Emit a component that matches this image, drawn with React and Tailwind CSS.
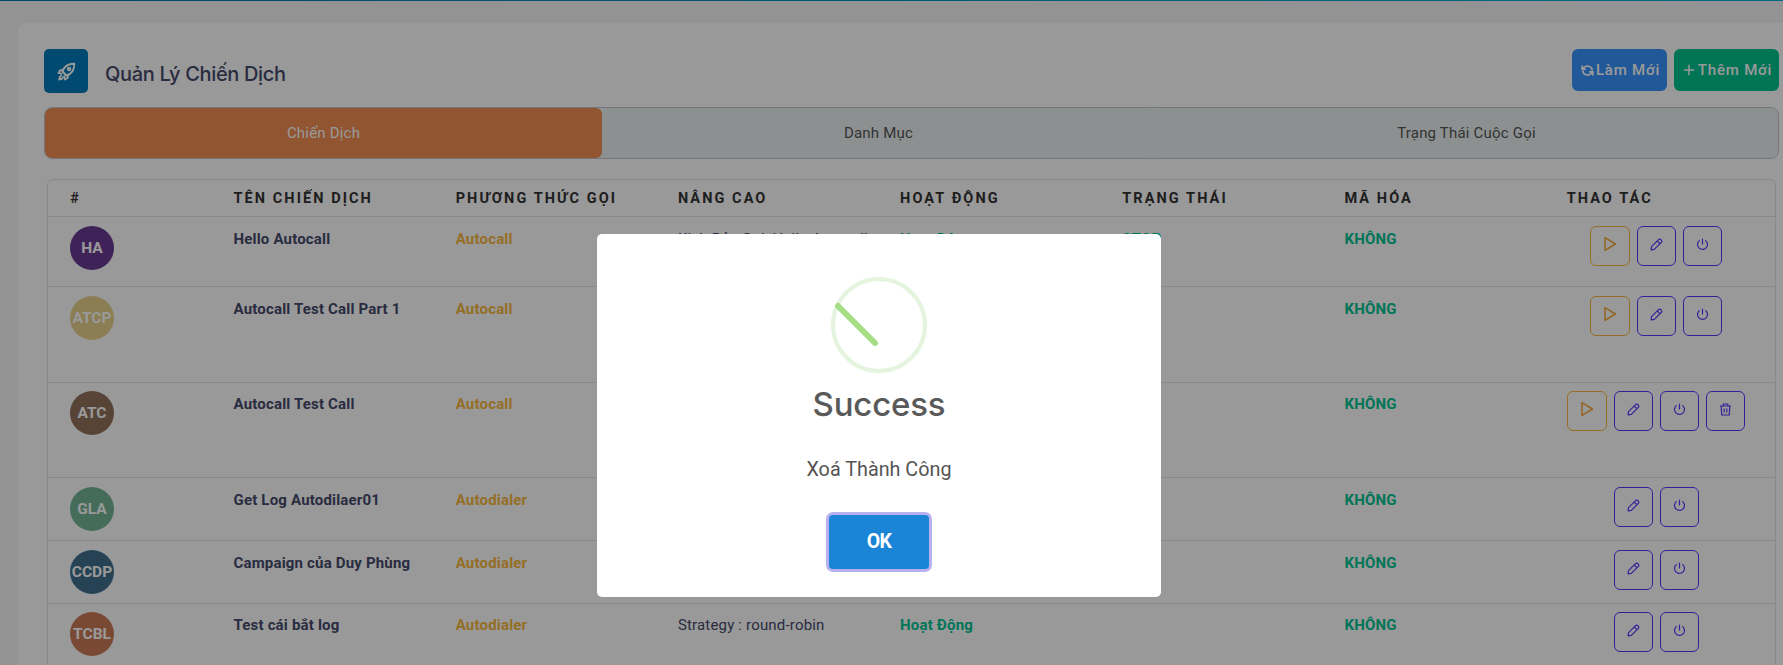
import React from "react";

const HEADS = ["#", "TÊN CHIẾN DỊCH", "PHƯƠNG THỨC GỌI", "NÂNG CAO", "HOẠT ĐỘNG", "TRẠNG THÁI", "MÃ HÓA", "THAO TÁC"];
const GRID = "grid grid-cols-[185px_222.2px_222.2px_222.2px_222.2px_222.2px_222.2px_1fr]";

const ROWS = [
  { code: "HA", bg: "bg-[#6a3a93]", name: "Hello Autocall", method: "Autocall", adv: "Kịch Bản Gọi: Hello Autocall", active: "Hoạt Động", status: "STOP", h: "h-[69px]", pad: "pt-[9px]", acts: ["play", "edit", "power"] },
  { code: "ATCP", bg: "bg-[#e8d08c]", name: "Autocall Test Call Part 1", method: "Autocall", h: "h-[96px]", pad: "pt-[9px]", acts: ["play", "edit", "power"] },
  { code: "ATC", bg: "bg-[#92725d]", name: "Autocall Test Call", method: "Autocall", h: "h-[95px]", pad: "pt-[8px]", acts: ["play", "edit", "power", "trash"] },
  { code: "GLA", bg: "bg-[#72b595]", name: "Get Log Autodilaer01", method: "Autodialer", h: "h-[63px]", pad: "pt-[9px]", acts: ["edit", "power"] },
  { code: "CCDP", bg: "bg-[#407190]", name: "Campaign của Duy Phùng", method: "Autodialer", h: "h-[63px]", pad: "pt-[9px]", acts: ["edit", "power"] },
  { code: "TCBL", bg: "bg-[#cc7b58]", name: "Test cái bắt log", method: "Autodialer", adv: "Strategy : round-robin", active: "Hoạt Động", h: "h-[70px]", pad: "pt-[8px]", acts: ["edit", "power"] },
];

function Icon({ kind }) {
  if (kind === "play")
    return (
      <svg width="16" height="16" viewBox="0 0 16 16" fill="none" stroke="currentColor" strokeWidth="1.5" strokeLinejoin="round">
        <path d="M3 1.6v12.8L13.4 8z" />
      </svg>
    );
  if (kind === "edit")
    return (
      <svg width="13" height="13" viewBox="0 0 13 13" fill="none" stroke="currentColor" strokeWidth="1.2" strokeLinejoin="round">
        <path d="M1.2 11.8l.3-3.200L8.300 1.800a1.950 1.950 0 0 1 2.800 2.800L4.300 11.400zM7.300 3l2.600 2.600" />
      </svg>
    );
  if (kind === "power")
    return (
      <svg width="13" height="13" viewBox="0 0 13 13" fill="none" stroke="currentColor" strokeWidth="1.2" strokeLinecap="round">
        <path d="M6.5 1v5M3.3 2.6a5 5 0 1 0 6.4 0" />
      </svg>
    );
  return (
    <svg width="13" height="13" viewBox="0 0 13 13" fill="none" stroke="currentColor" strokeWidth="1.2" strokeLinejoin="round">
      <path d="M1 3h11M4.2 3V1h4.6v2M2.2 3l.5 9h7.6l.5-9M5.2 5.4v4.2M7.8 5.4v4.2" />
    </svg>
  );
}

function Action({ kind }) {
  const tone = kind === "play" ? "border-[#fab83c] text-[#f5a93b]" : "border-[#5a35ff] text-[#5a35ff]";
  return (
    <button className={`flex size-[39.5px] shrink-0 items-center justify-center rounded-md border pb-[3px] ${tone}`}>
      <Icon kind={kind} />
    </button>
  );
}

function Row({ row }) {
  return (
    <div className={`${GRID} ${row.h} ${row.pad} border-t border-[#e4e4e4] pl-[22px] text-[15px] font-bold leading-[22px] tracking-[0.18px] text-[#454a6b] first:border-t-0`}>
      <div>
        <div className={`flex size-11 items-center justify-center rounded-full text-[15.500px] tracking-normal text-white ${row.bg}`}>{row.code}</div>
      </div>
      <div className="-ml-[21.5px] pt-[2px]">{row.name}</div>
      <div className="-ml-[21.5px] pt-[2px] text-[#f8b840]">{row.method}</div>
      <div className="-ml-[21.5px] pt-[2px] font-normal">{row.adv}</div>
      <div className="-ml-[21.5px] pt-[2px] text-[#00c493]">{row.active}</div>
      <div className="-ml-[21.5px] pt-[2px] text-[#00c493]">{row.status}</div>
      <div className="-ml-[21.5px] pt-[2px] text-[#00c493]">KHÔNG</div>
      <div className="-ml-[21.500px] flex w-[179.5px] justify-center gap-[6.7px]">
        {row.acts.map((a) => (
          <Action key={a} kind={a} />
        ))}
      </div>
    </div>
  );
}

export default function App() {
  return (
    <div className="relative h-[665px] w-full overflow-hidden bg-[#f6f6f6] font-[Roboto,sans-serif]">
      <div className="h-px w-full bg-linear-to-r from-[#0078b8] to-[#00aee0]" />
      <div className="ml-[18px] mt-[22px] h-[700px] rounded-tl-lg bg-white pl-[26px] pr-1 pt-[26px]">
        <header className="flex h-11 items-start justify-between">
          <div className="flex items-center">
            <div className="flex size-11 items-center justify-center rounded-[5px] bg-[#007bbb] text-white">
              <svg width="19" height="19" viewBox="0 0 19 19" fill="none" stroke="currentColor" strokeWidth="1.9" strokeLinejoin="round" strokeLinecap="round">
                <path d="M5.5 9.5C7 5 11 1.6 17.3 1.7 17.4 8 14 12 9.5 13.500z" />
                <path d="M6 8.200H3.200L1.500 11l3.200.6M10.800 13v2.800L8 17.500l-.6-3.200" />
                <circle cx="12.100" cy="6.900" r="1.300" />
                <path d="M4.300 13.500c-1.500.7-2 2-2.200 4 2-.2 3.300-.7 4-2.200" />
              </svg>
            </div>
            <h1 className="ml-[17px] pt-[6px] font-[Inter,sans-serif] text-[20px] font-medium tracking-[-0.340px] text-[#454a6b]">Quản Lý Chiến Dịch</h1>
          </div>
          <div className="flex gap-[7px] text-[15px] font-medium tracking-[0.8px] text-white">
            <button className="flex h-[42px] w-[95px] items-center justify-center rounded-md bg-[#3693fd] pl-[2px]">
              <svg className="mr-[2px] shrink-0" width="13" height="13" viewBox="0 0 14 14" fill="none" stroke="currentColor" strokeWidth="1.8">
                <path d="M1.200 1.500v4h4M12.800 12.500v-4h-4M1.600 5.300l1.600-1.600C5.800 1.200 11.500 1.800 12.300 7M12.400 8.700l-1.600 1.600C8.200 12.800 2.500 12.200 1.700 7" />
              </svg>
              Làm Mới
            </button>
            <button className="flex h-[42px] w-[105px] items-center justify-center rounded-md bg-[#00c38f] pl-[2px]">
              <svg className="mr-[3px] shrink-0" width="12" height="12" viewBox="0 0 12 12" stroke="currentColor" strokeWidth="1.5">
                <path d="M6 .8v10.400M.8 6h10.400" />
              </svg>
              Thêm Mới
            </button>
          </div>
        </header>
        <nav className="mt-[14px] flex h-[52px] overflow-hidden rounded-lg border border-[#c4c4cc] bg-[#f1f4f4] text-[15px] tracking-[0.2px] text-[#555]">
          <div className="flex w-[557px] items-center justify-center rounded-md bg-[#f28f53] text-white">Chiến Dịch</div>
          <div className="flex w-[553px] items-center justify-center rounded-md bg-[#ebf1f1]">Danh Mục</div>
          <div className="flex flex-1 items-center justify-center rounded-md bg-[#ebf1f1]">Trạng Thái Cuộc Gọi</div>
        </nav>
        <section className="ml-[3px] mr-[3px] mt-5 h-[600px] rounded-t-md border border-[#e4e4e4]">
          <div className={`${GRID} h-[37px] items-center border-b border-[#e4e4e4] pl-[22px] pt-px text-[14.500px] font-bold tracking-[2.080px] text-[#333]`}>
            {HEADS.map((h, i) => (
              <div key={h} className={i ? "-ml-[21.5px]" : "font-medium"}>{h}</div>
            ))}
          </div>
          <div>
            {ROWS.map((r) => (
              <Row key={r.code} row={r} />
            ))}
          </div>
        </section>
      </div>
      <div className="absolute inset-0 flex items-start justify-center bg-black/40 pt-[234px]">
        <div className="-ml-[25px] flex h-[363px] w-[564px] flex-col items-center rounded-[5px] bg-white">
          <svg className="mt-[43px]" width="96" height="96" viewBox="0 0 96 96" fill="none">
            <circle cx="48" cy="48" r="46" stroke="#e4f4de" strokeWidth="4" />
            <path d="M7 29 44 66" stroke="#a5dc86" strokeWidth="6" strokeLinecap="round" />
          </svg>
          <h2 className="mt-[10px] font-[Inter,sans-serif] text-[33px] font-medium leading-[42px] tracking-[-0.2px] text-[#595959]">Success</h2>
          <p className="mt-[30px] text-[19.800px] leading-[30px] text-[#545454]">Xoá Thành Công</p>
          <button className="mt-[30px] flex h-[54px] w-[100px] items-center justify-center rounded bg-[#1a85d6] text-[19.500px] font-bold tracking-[-0.6px] text-white shadow-[0_0_0_3px_#b8b1f0]">OK</button>
        </div>
      </div>
    </div>
  );
}
